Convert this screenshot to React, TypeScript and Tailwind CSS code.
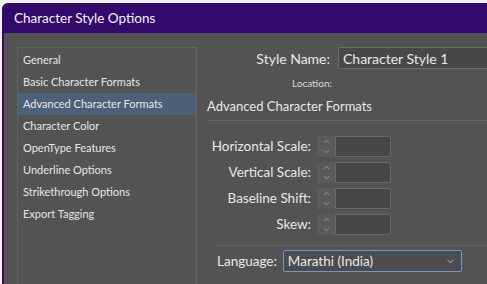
import { ChevronDown, ChevronUp } from "lucide-react";

const sections = [
  "General",
  "Basic Character Formats",
  "Advanced Character Formats",
  "Character Color",
  "OpenType Features",
  "Underline Options",
  "Strikethrough Options",
  "Export Tagging",
];

const fields = ["Horizontal Scale:", "Vertical Scale:", "Baseline Shift:", "Skew:"];

function Spinner() {
  return (
    <div className="flex h-[21px] items-stretch">
      <div className="flex w-[18px] flex-col items-center justify-between rounded-l-[2px] bg-[#5a5a5a] py-[1px] text-[#b4b4b4]">
        <ChevronUp className="h-[9px] w-[9px]" strokeWidth={1.75} />
        <ChevronDown className="h-[9px] w-[9px]" strokeWidth={1.75} />
      </div>
      <div className="w-[56px] rounded-r-[2px] border border-[#686868] bg-[#474747]" />
    </div>
  );
}

export default function App() {
  return (
    <div
      className="h-[284px] w-[487px] overflow-hidden whitespace-nowrap bg-[#f4f4f6]"
      style={{ fontFamily: "Lato, 'Open Sans', sans-serif" }}
    >
      <div className="ml-[2px] mt-[3px] h-[281px] overflow-hidden rounded-tl-[6px] border-l-2 border-[#33096c] bg-[#535353]">
        {/* Title bar */}
        <div className="flex h-[30px] items-center bg-[#33096c] pl-[10px] text-[13.5px] text-[#f4f2f8]">
          Character Style Options
        </div>

        <div className="flex pl-[13px] pt-[14px]">
          {/* Section list */}
          <div className="h-[260px] w-[180px] shrink-0 border border-[#626262] pt-[1px] text-[11px] text-[#e6e6e6]">
            {sections.map((s) => (
              <div
                key={s}
                className={`flex h-[22px] items-center pl-[5px] ${
                  s === "Advanced Character Formats" ? "bg-[#4b6179]" : ""
                }`}
              >
                {s}
              </div>
            ))}
          </div>

          {/* Options panel */}
          <div className="flex-1 pl-[10px] text-[#e8e8e8]">
            <div className="flex h-[22px] items-center">
              <span className="w-[123px] text-right text-[14px]">Style Name:</span>
              <div className="ml-[8px] flex h-[22px] flex-1 items-center rounded-l-[2px] border border-r-0 border-[#6c6c6c] bg-[#484848] pl-[4px] text-[14px]">
                Character Style 1
              </div>
            </div>
            <div className="mt-[8px] flex h-[12px] items-center">
              <span className="w-[125px] text-right text-[10px] text-[#dcdcdc]">Location:</span>
            </div>
            <div className="mt-[9px] text-[13px] leading-[16px]">Advanced Character Formats</div>
            <div className="mt-[6px] h-px bg-[#666666]" />

            <div className="mt-[15px] flex flex-col gap-[5px]">
              {fields.map((f) => (
                <div key={f} className="flex items-center">
                  <span className="w-[104px] text-right text-[13.5px]">{f}</span>
                  <div className="ml-[6px]">
                    <Spinner />
                  </div>
                </div>
              ))}
            </div>

            <div className="ml-[10px] mt-[10px] h-px bg-[#666666]" />

            <div className="mt-[4px] flex items-center pl-[10px]">
              <span className="text-[13.5px]">Language:</span>
              <div className="ml-[6px] flex h-[22px] w-[179px] items-center justify-between rounded-[2px] border border-[#6e98d0] bg-[#4c4c4c] pl-[4px] pr-[5px] text-[13.5px]">
                Marathi (India)
                <ChevronDown className="h-[11px] w-[11px] text-[#d0d0d0]" strokeWidth={1.75} />
              </div>
            </div>
          </div>
        </div>
      </div>
    </div>
  );
}
